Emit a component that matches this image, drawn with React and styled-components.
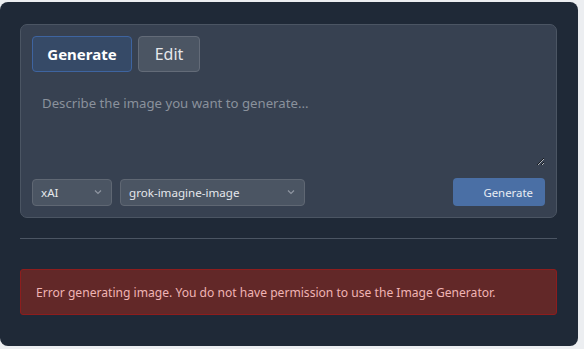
import styled, { createGlobalStyle } from "styled-components"

const Global = createGlobalStyle`
  body {
    margin: 0;
    background: #eceef1;
    font-family: "Noto Sans", "Open Sans", sans-serif;
  }
`

const Panel = styled.div`
  margin-top: 2px;
  width: 578px;
  box-sizing: border-box;
  background: #1f2937;
  border-radius: 8px;
  padding: 22px 21px 31px 20px;
`
const Card = styled.div`
  background: #374151;
  border: 1px solid #4b5563;
  border-radius: 7px;
  padding: 11px;
  display: flex;
  flex-direction: column;
`
const Tabs = styled.div`
  display: flex;
  gap: 6px;
`
const Tab = styled.button`
  width: ${p => p.$w}px;
  height: 36px;
  padding: 0;
  border-radius: 4px;
  font-family: inherit;
  font-size: ${p => (p.$active ? 15 : 16)}px;
  font-weight: ${p => (p.$active ? 700 : 400)};
  color: ${p => (p.$active ? "#ffffff" : "#e5e7eb")};
  background: ${p => (p.$active ? "#364a67" : "#4b5563")};
  border: 1px solid ${p => (p.$active ? "#3e64a0" : "#636b78")};
`
const Prompt = styled.textarea`
  margin-top: 12px;
  height: 82px;
  box-sizing: border-box;
  background: transparent;
  border: none;
  outline: none;
  resize: vertical;
  padding: 10px 10px;
  font-family: inherit;
  font-size: 13.2px;
  color: #e5e7eb;
  caret-color: #e5e7eb;
  &::placeholder {
    color: #8a919c;
  }
`
const Controls = styled.div`
  margin-top: 12px;
  display: flex;
  align-items: center;
  gap: 8px;
`
const Select = styled.div`
  width: ${p => p.$w}px;
  height: 27px;
  box-sizing: border-box;
  background: #4b5563;
  border: 1px solid #5f6773;
  border-radius: 4px;
  display: flex;
  align-items: center;
  justify-content: space-between;
  padding: 0 8px;
  font-size: 11.6px;
  color: #e5e7eb;
  svg {
    width: 10px;
    height: 10px;
    stroke: #8f96a1;
  }
`
const Submit = styled.button`
  margin-left: auto;
  width: 92px;
  height: 28px;
  border: none;
  border-radius: 4px;
  background: #4a6fa5;
  color: #e8ecf3;
  font-family: inherit;
  font-size: 11.4px;
  padding: 0 12px 0 0;
  text-align: right;
`
const Rule = styled.hr`
  margin: 20px 0 30px;
  border: none;
  border-top: 1px solid #4b5563;
`
const Error = styled.div`
  height: 46px;
  box-sizing: border-box;
  background: #622828;
  border: 1px solid #8d1d1d;
  border-radius: 3px;
  display: flex;
  align-items: center;
  padding: 0 15px;
  font-size: 12.1px;
  color: #f0b4b4;
`

function Chevron() {
  return (
    <svg viewBox="0 0 10 10" fill="none" strokeWidth="1.2">
      <path d="M2 3.5 L5 6.5 L8 3.5" />
    </svg>
  )
}

export default function App() {
  return (
    <>
      <Global />
      <Panel>
        <Card>
          <Tabs>
            <Tab $active $w={100}>Generate</Tab>
            <Tab $w={62}>Edit</Tab>
          </Tabs>
          <Prompt placeholder="Describe the image you want to generate..." autoFocus />
          <Controls>
            <Select $w={80}>
              xAI
              <Chevron />
            </Select>
            <Select $w={185}>
              grok-imagine-image
              <Chevron />
            </Select>
            <Submit>Generate</Submit>
          </Controls>
        </Card>
        <Rule />
        <Error>
          Error generating image. You do not have permission to use the Image Generator.
        </Error>
      </Panel>
    </>
  )
}
